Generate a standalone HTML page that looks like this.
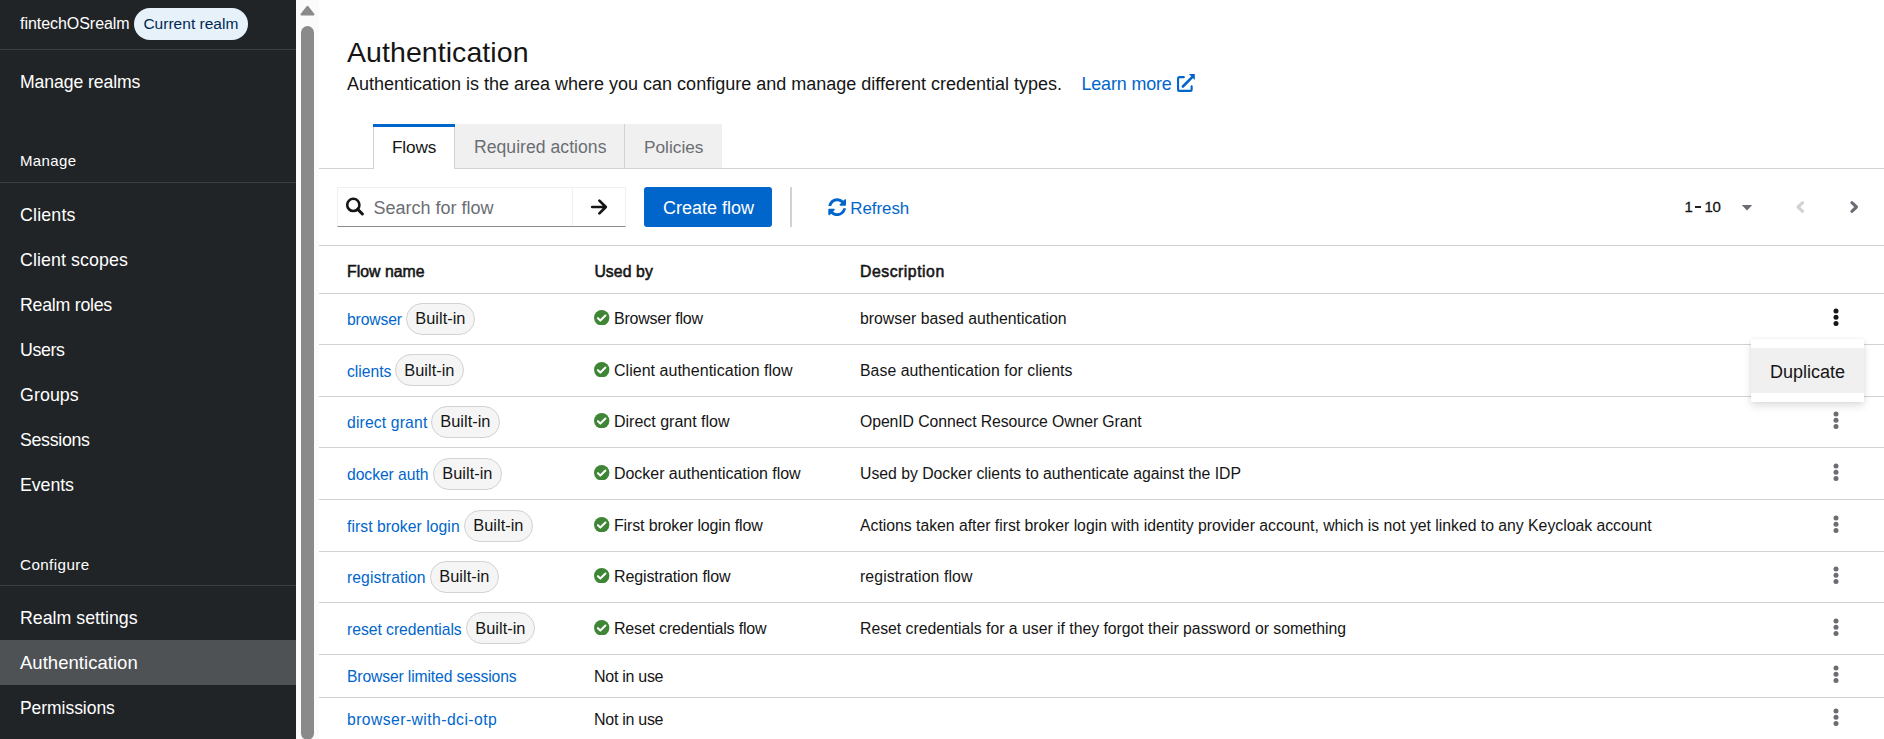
<!DOCTYPE html>
<html><head><meta charset="utf-8">
<style>
*{box-sizing:border-box;margin:0;padding:0}
html,body{width:1884px;height:739px;overflow:hidden;background:#fff;font-family:"Liberation Sans",sans-serif;color:#151515}
.t{position:absolute;white-space:nowrap}
.r{position:absolute}
</style></head><body>
<div class="r" style="left:0px;top:0px;width:296px;height:739px;background:#212427;"></div>
<div class="t" style="left:20px;top:14.46px;font-size:16px;line-height:20px;color:#fff;letter-spacing:-0.045px;">fintechOSrealm</div>
<div class="r" style="left:134px;top:8px;width:114px;height:32px;background:#e7f1fa;border-radius:16px"></div>
<div class="t" style="left:143.4px;top:13.83px;font-size:15.5px;line-height:19px;color:#002952;letter-spacing:0.021px;">Current realm</div>
<div class="r" style="left:0px;top:49px;width:296px;height:1px;background:#3c3f42;"></div>
<div class="t" style="left:20px;top:70.60px;font-size:17.6px;line-height:22px;color:#fff;letter-spacing:-0.076px;">Manage realms</div>
<div class="t" style="left:20px;top:151.30px;font-size:15px;line-height:19px;color:#fff;letter-spacing:0.355px;">Manage</div>
<div class="r" style="left:0px;top:182px;width:296px;height:1px;background:#3c3f42;"></div>
<div class="t" style="left:20px;top:203.83px;font-size:17.8px;line-height:22px;color:#fff;letter-spacing:0.179px;">Clients</div>
<div class="t" style="left:20px;top:248.83px;font-size:17.8px;line-height:22px;color:#fff;letter-spacing:0.096px;">Client scopes</div>
<div class="t" style="left:20px;top:293.83px;font-size:17.8px;line-height:22px;color:#fff;letter-spacing:-0.266px;">Realm roles</div>
<div class="t" style="left:20px;top:338.83px;font-size:17.8px;line-height:22px;color:#fff;letter-spacing:-0.376px;">Users</div>
<div class="t" style="left:20px;top:383.83px;font-size:17.8px;line-height:22px;color:#fff;letter-spacing:0.083px;">Groups</div>
<div class="t" style="left:20px;top:428.83px;font-size:17.8px;line-height:22px;color:#fff;letter-spacing:-0.318px;">Sessions</div>
<div class="t" style="left:20px;top:473.83px;font-size:17.8px;line-height:22px;color:#fff;letter-spacing:-0.085px;">Events</div>
<div class="t" style="left:20px;top:554.83px;font-size:15.2px;line-height:19px;color:#fff;letter-spacing:0.414px;">Configure</div>
<div class="r" style="left:0px;top:585px;width:296px;height:1px;background:#3c3f42;"></div>
<div class="t" style="left:20px;top:606.83px;font-size:17.8px;line-height:22px;color:#fff;letter-spacing:-0.004px;">Realm settings</div>
<div class="r" style="left:0px;top:640px;width:296px;height:45px;background:#4f5255;"></div>
<div class="t" style="left:20px;top:650.79px;font-size:18.5px;line-height:23px;color:#fff;letter-spacing:0.035px;">Authentication</div>
<div class="t" style="left:20px;top:696.64px;font-size:17.5px;line-height:22px;color:#fff;letter-spacing:-0.049px;">Permissions</div>
<div class="r" style="left:296px;top:0px;width:23px;height:739px;background:#fbfbfb;"></div>
<svg class="r" style="left:296px;top:0" width="23" height="20"><path d="M5.6 14.5 L11.5 6.9 L17.4 14.5 Z" fill="#8a8a8a" stroke="#8a8a8a" stroke-width="2.2" stroke-linejoin="round"/></svg>
<div class="r" style="left:301px;top:26px;width:13px;height:714px;background:#8a8a8a;border-radius:6.5px"></div>
<div class="t" style="left:347px;top:33.92px;font-size:28.5px;line-height:36px;color:#151515;letter-spacing:0.068px;">Authentication</div>
<div class="t" style="left:347px;top:73.16px;font-size:18px;line-height:22px;color:#151515;letter-spacing:-0.002px;">Authentication is the area where you can configure and manage different credential types.</div>
<div class="t" style="left:1081.5px;top:73.00px;font-size:17.9px;line-height:22px;color:#0066cc;letter-spacing:-0.14px;">Learn more</div>
<svg class="r" style="left:1176px;top:73px" width="20" height="20" viewBox="0 0 20 20"><path d="M7.8 4.15 H3.5 Q2.05 4.15 2.05 5.6 V16.4 Q2.05 17.85 3.5 17.85 H14.2 Q15.65 17.85 15.65 16.4 V13.2" fill="none" stroke="#0066cc" stroke-width="2.1" stroke-linecap="round"/><path d="M6.9 13.5 L16.2 4.1" stroke="#0066cc" stroke-width="2.6" stroke-linecap="round"/><path d="M12.9 1.1 H18.8 V7 Z" fill="#0066cc"/></svg>
<div class="r" style="left:319px;top:168px;width:1565px;height:1px;background:#d2d2d2;"></div>
<div class="r" style="left:455px;top:124px;width:267px;height:44px;background:#f0f0f0;"></div>
<div class="r" style="left:624px;top:124px;width:1px;height:44px;background:#d2d2d2;"></div>
<div class="r" style="left:373px;top:124px;width:82px;height:45px;background:#fff;border-left:1px solid #d2d2d2;border-right:1px solid #d2d2d2"></div>
<div class="r" style="left:373px;top:124px;width:82px;height:3px;background:#0066cc;"></div>
<div class="t" style="left:392px;top:135.94px;font-size:17.2px;line-height:22px;color:#151515;letter-spacing:-0.134px;">Flows</div>
<div class="t" style="left:474px;top:135.80px;font-size:17.6px;line-height:22px;color:#6a6e73;letter-spacing:0.027px;">Required actions</div>
<div class="t" style="left:644px;top:135.91px;font-size:17.3px;line-height:22px;color:#6a6e73;letter-spacing:-0.014px;">Policies</div>
<div class="r" style="left:337px;top:187px;width:289px;height:40px;background:#fff;border:1px solid #f0f0f0;border-bottom:1px solid #8a8d90"></div>
<div class="r" style="left:572px;top:188px;width:1px;height:38px;background:#f0f0f0;"></div>
<svg class="r" style="left:344px;top:196px" width="22" height="22" viewBox="0 0 22 22"><circle cx="9.3" cy="8.9" r="6.1" fill="none" stroke="#151515" stroke-width="2.6"/><path d="M13.8 13.4 L18.4 18" stroke="#151515" stroke-width="3" stroke-linecap="round"/></svg>
<div class="t" style="left:373.5px;top:196.56px;font-size:18px;line-height:22px;color:#6a6e73;letter-spacing:-0.008px;">Search for flow</div>
<svg class="r" style="left:589px;top:197px" width="20" height="20" viewBox="0 0 20 20"><path d="M3.2 10 H16.5 M10.4 3.6 L16.8 10 L10.4 16.4" fill="none" stroke="#151515" stroke-width="2.7" stroke-linecap="round" stroke-linejoin="round"/></svg>
<div class="r" style="left:644px;top:187px;width:128px;height:40px;background:#0066cc;border-radius:3px"></div>
<div class="t" style="left:663px;top:197.16px;font-size:18px;line-height:22px;color:#fff;letter-spacing:-0.008px;">Create flow</div>
<div class="r" style="left:790px;top:187px;width:2px;height:40px;background:#d2d2d2;"></div>
<svg class="r" style="left:827.8px;top:197.8px" width="18.4" height="18.4" viewBox="0 0 512 512"><path fill="#0066cc" d="M370.72 133.28C339.458 104.008 298.888 87.962 255.848 88c-77.458.068-144.328 53.178-162.791 126.85-1.344 5.363-6.122 9.15-11.651 9.15H24.103c-7.498 0-13.194-6.807-11.807-14.176C33.933 94.924 134.813 8 256 8c66.448 0 126.791 26.136 171.315 68.685L463.03 40.97C478.149 25.851 504 36.559 504 57.941V192c0 13.255-10.745 24-24 24H345.941c-21.382 0-32.090-25.851-16.971-40.971l41.75-41.749zM32 296h134.059c21.382 0 32.090 25.851 16.971 40.971l-41.75 41.750c31.262 29.273 71.835 45.319 114.876 45.280 77.418-.07 144.315-53.144 162.787-126.849 1.344-5.363 6.122-9.150 11.651-9.150h57.304c7.498 0 13.194 6.807 11.807 14.176C478.067 417.076 377.187 504 256 504c-66.448 0-126.791-26.136-171.315-68.685L48.970 471.030C33.851 486.149 8 475.441 8 454.059V320c0-13.255 10.745-24 24-24z"/></svg>
<div class="t" style="left:850.3px;top:198.14px;font-size:16.9px;line-height:21px;color:#0066cc;letter-spacing:-0.032px;">Refresh</div>
<div class="t" style="left:1684.5px;top:197.30px;font-size:15px;line-height:19px;color:#151515;-webkit-text-stroke:0.3px #151515;">1</div>
<div class="r" style="left:1695.1px;top:206.3px;width:5.9px;height:1.4px;background:#202020;"></div>
<div class="t" style="left:1704.5px;top:197.30px;font-size:15px;line-height:19px;color:#151515;letter-spacing:-0.3px;-webkit-text-stroke:0.3px #151515;">10</div>
<svg class="r" style="left:1740px;top:203px" width="14" height="9" viewBox="0 0 14 9"><path d="M1.8 2 H12.2 L7 7.4 Z" fill="#6a6e73"/></svg>
<svg class="r" style="left:1794px;top:199px" width="13" height="16" viewBox="0 0 13 16"><path d="M8.6 3.7 L4 8 L8.6 12.3" fill="none" stroke="#d2d2d2" stroke-width="3.1" stroke-linecap="round" stroke-linejoin="round"/></svg>
<svg class="r" style="left:1848px;top:199px" width="13" height="16" viewBox="0 0 13 16"><path d="M3.9 3.7 L8.5 8 L3.9 12.3" fill="none" stroke="#6a6e73" stroke-width="3.1" stroke-linecap="round" stroke-linejoin="round"/></svg>
<div class="r" style="left:319px;top:245px;width:1565px;height:1px;background:#d2d2d2;"></div>
<div class="t" style="left:347px;top:261.93px;font-size:15.8px;line-height:20px;color:#151515;letter-spacing:0.042px;-webkit-text-stroke:0.55px #151515;">Flow name</div>
<div class="t" style="left:594.4px;top:261.93px;font-size:15.8px;line-height:20px;color:#151515;letter-spacing:0.076px;-webkit-text-stroke:0.55px #151515;">Used by</div>
<div class="t" style="left:860px;top:261.93px;font-size:15.8px;line-height:20px;color:#151515;letter-spacing:0.516px;-webkit-text-stroke:0.55px #151515;">Description</div>
<div class="r" style="left:319px;top:293px;width:1565px;height:1px;background:#d2d2d2;"></div>
<div class="t" style="left:347px;top:310.06px;font-size:15.7px;line-height:20px;color:#0066cc;letter-spacing:-0.142px;">browser</div>
<div class="r" style="left:406px;top:303px;width:69px;height:32px;background:#f5f5f5;border:1px solid #d2d2d2;border-radius:16px"></div>
<div class="t" style="left:415.3px;top:308.12px;font-size:16.4px;line-height:20px;color:#151515;letter-spacing:0.008px;">Built-in</div>
<svg class="r" style="left:594.2px;top:310.1px" width="15.4" height="15.4" viewBox="0 0 16 16"><circle cx="8" cy="8" r="8" fill="#3e8635"/><path d="M4.1 8.5 L6.6 11 L11.9 5.7" fill="none" stroke="#fff" stroke-width="2.1" stroke-linecap="round" stroke-linejoin="round"/></svg>
<div class="t" style="left:614px;top:309.06px;font-size:16px;line-height:20px;color:#151515;letter-spacing:-0.231px;">Browser flow</div>
<div class="t" style="left:860px;top:309.13px;font-size:15.8px;line-height:20px;color:#151515;letter-spacing:0.01px;">browser based authentication</div>
<svg class="r" style="left:1832px;top:307.7px" width="8" height="19" viewBox="0 0 8 19"><circle cx="4" cy="3" r="2.5" fill="#151515"/><circle cx="4" cy="9.2" r="2.5" fill="#151515"/><circle cx="4" cy="15.4" r="2.5" fill="#151515"/></svg>
<div class="r" style="left:319px;top:344px;width:1565px;height:1px;background:#d2d2d2;"></div>
<div class="t" style="left:347px;top:361.56px;font-size:15.7px;line-height:20px;color:#0066cc;letter-spacing:-0.002px;">clients</div>
<div class="r" style="left:395px;top:354px;width:69px;height:32px;background:#f5f5f5;border:1px solid #d2d2d2;border-radius:16px"></div>
<div class="t" style="left:404.3px;top:359.62px;font-size:16.4px;line-height:20px;color:#151515;letter-spacing:0.008px;">Built-in</div>
<svg class="r" style="left:594.2px;top:361.6px" width="15.4" height="15.4" viewBox="0 0 16 16"><circle cx="8" cy="8" r="8" fill="#3e8635"/><path d="M4.1 8.5 L6.6 11 L11.9 5.7" fill="none" stroke="#fff" stroke-width="2.1" stroke-linecap="round" stroke-linejoin="round"/></svg>
<div class="t" style="left:614px;top:360.56px;font-size:16px;line-height:20px;color:#151515;letter-spacing:0.027px;">Client authentication flow</div>
<div class="t" style="left:860px;top:360.63px;font-size:15.8px;line-height:20px;color:#151515;letter-spacing:0.053px;">Base authentication for clients</div>
<div class="r" style="left:319px;top:396px;width:1565px;height:1px;background:#d2d2d2;"></div>
<div class="t" style="left:347px;top:413.06px;font-size:15.7px;line-height:20px;color:#0066cc;letter-spacing:0.16px;">direct grant</div>
<div class="r" style="left:431px;top:406px;width:69px;height:32px;background:#f5f5f5;border:1px solid #d2d2d2;border-radius:16px"></div>
<div class="t" style="left:440.3px;top:411.12px;font-size:16.4px;line-height:20px;color:#151515;letter-spacing:0.008px;">Built-in</div>
<svg class="r" style="left:594.2px;top:413.1px" width="15.4" height="15.4" viewBox="0 0 16 16"><circle cx="8" cy="8" r="8" fill="#3e8635"/><path d="M4.1 8.5 L6.6 11 L11.9 5.7" fill="none" stroke="#fff" stroke-width="2.1" stroke-linecap="round" stroke-linejoin="round"/></svg>
<div class="t" style="left:614px;top:412.06px;font-size:16px;line-height:20px;color:#151515;letter-spacing:-0.003px;">Direct grant flow</div>
<div class="t" style="left:860px;top:412.13px;font-size:15.8px;line-height:20px;color:#151515;letter-spacing:-0.087px;">OpenID Connect Resource Owner Grant</div>
<svg class="r" style="left:1832px;top:411.4px" width="8" height="19" viewBox="0 0 8 19"><circle cx="4" cy="3" r="2.5" fill="#6a6e73"/><circle cx="4" cy="9.2" r="2.5" fill="#6a6e73"/><circle cx="4" cy="15.4" r="2.5" fill="#6a6e73"/></svg>
<div class="r" style="left:319px;top:447px;width:1565px;height:1px;background:#d2d2d2;"></div>
<div class="t" style="left:347px;top:464.56px;font-size:15.7px;line-height:20px;color:#0066cc;letter-spacing:-0.053px;">docker auth</div>
<div class="r" style="left:433px;top:458px;width:69px;height:32px;background:#f5f5f5;border:1px solid #d2d2d2;border-radius:16px"></div>
<div class="t" style="left:442.3px;top:462.62px;font-size:16.4px;line-height:20px;color:#151515;letter-spacing:0.008px;">Built-in</div>
<svg class="r" style="left:594.2px;top:464.6px" width="15.4" height="15.4" viewBox="0 0 16 16"><circle cx="8" cy="8" r="8" fill="#3e8635"/><path d="M4.1 8.5 L6.6 11 L11.9 5.7" fill="none" stroke="#fff" stroke-width="2.1" stroke-linecap="round" stroke-linejoin="round"/></svg>
<div class="t" style="left:614px;top:463.56px;font-size:16px;line-height:20px;color:#151515;letter-spacing:-0.041px;">Docker authentication flow</div>
<div class="t" style="left:860px;top:463.63px;font-size:15.8px;line-height:20px;color:#151515;letter-spacing:-0.018px;">Used by Docker clients to authenticate against the IDP</div>
<svg class="r" style="left:1832px;top:462.9px" width="8" height="19" viewBox="0 0 8 19"><circle cx="4" cy="3" r="2.5" fill="#6a6e73"/><circle cx="4" cy="9.2" r="2.5" fill="#6a6e73"/><circle cx="4" cy="15.4" r="2.5" fill="#6a6e73"/></svg>
<div class="r" style="left:319px;top:499px;width:1565px;height:1px;background:#d2d2d2;"></div>
<div class="t" style="left:347px;top:516.56px;font-size:15.7px;line-height:20px;color:#0066cc;letter-spacing:0.059px;">first broker login</div>
<div class="r" style="left:464px;top:510px;width:69px;height:32px;background:#f5f5f5;border:1px solid #d2d2d2;border-radius:16px"></div>
<div class="t" style="left:473.3px;top:514.62px;font-size:16.4px;line-height:20px;color:#151515;letter-spacing:0.008px;">Built-in</div>
<svg class="r" style="left:594.2px;top:516.6px" width="15.4" height="15.4" viewBox="0 0 16 16"><circle cx="8" cy="8" r="8" fill="#3e8635"/><path d="M4.1 8.5 L6.6 11 L11.9 5.7" fill="none" stroke="#fff" stroke-width="2.1" stroke-linecap="round" stroke-linejoin="round"/></svg>
<div class="t" style="left:614px;top:515.56px;font-size:16px;line-height:20px;color:#151515;letter-spacing:-0.149px;">First broker login flow</div>
<div class="t" style="left:860px;top:515.63px;font-size:15.8px;line-height:20px;color:#151515;letter-spacing:-0.018px;">Actions taken after first broker login with identity provider account, which is not yet linked to any Keycloak account</div>
<svg class="r" style="left:1832px;top:514.9px" width="8" height="19" viewBox="0 0 8 19"><circle cx="4" cy="3" r="2.5" fill="#6a6e73"/><circle cx="4" cy="9.2" r="2.5" fill="#6a6e73"/><circle cx="4" cy="15.4" r="2.5" fill="#6a6e73"/></svg>
<div class="r" style="left:319px;top:551px;width:1565px;height:1px;background:#d2d2d2;"></div>
<div class="t" style="left:347px;top:568.06px;font-size:15.7px;line-height:20px;color:#0066cc;letter-spacing:0.084px;">registration</div>
<div class="r" style="left:430px;top:561px;width:69px;height:32px;background:#f5f5f5;border:1px solid #d2d2d2;border-radius:16px"></div>
<div class="t" style="left:439.3px;top:566.12px;font-size:16.4px;line-height:20px;color:#151515;letter-spacing:0.008px;">Built-in</div>
<svg class="r" style="left:594.2px;top:568.1px" width="15.4" height="15.4" viewBox="0 0 16 16"><circle cx="8" cy="8" r="8" fill="#3e8635"/><path d="M4.1 8.5 L6.6 11 L11.9 5.7" fill="none" stroke="#fff" stroke-width="2.1" stroke-linecap="round" stroke-linejoin="round"/></svg>
<div class="t" style="left:614px;top:567.06px;font-size:16px;line-height:20px;color:#151515;letter-spacing:-0.107px;">Registration flow</div>
<div class="t" style="left:860px;top:567.13px;font-size:15.8px;line-height:20px;color:#151515;letter-spacing:0.108px;">registration flow</div>
<svg class="r" style="left:1832px;top:566.4px" width="8" height="19" viewBox="0 0 8 19"><circle cx="4" cy="3" r="2.5" fill="#6a6e73"/><circle cx="4" cy="9.2" r="2.5" fill="#6a6e73"/><circle cx="4" cy="15.4" r="2.5" fill="#6a6e73"/></svg>
<div class="r" style="left:319px;top:602px;width:1565px;height:1px;background:#d2d2d2;"></div>
<div class="t" style="left:347px;top:619.56px;font-size:15.7px;line-height:20px;color:#0066cc;letter-spacing:-0.025px;">reset credentials</div>
<div class="r" style="left:466px;top:612px;width:69px;height:32px;background:#f5f5f5;border:1px solid #d2d2d2;border-radius:16px"></div>
<div class="t" style="left:475.3px;top:617.62px;font-size:16.4px;line-height:20px;color:#151515;letter-spacing:0.008px;">Built-in</div>
<svg class="r" style="left:594.2px;top:619.6px" width="15.4" height="15.4" viewBox="0 0 16 16"><circle cx="8" cy="8" r="8" fill="#3e8635"/><path d="M4.1 8.5 L6.6 11 L11.9 5.7" fill="none" stroke="#fff" stroke-width="2.1" stroke-linecap="round" stroke-linejoin="round"/></svg>
<div class="t" style="left:614px;top:618.56px;font-size:16px;line-height:20px;color:#151515;letter-spacing:-0.189px;">Reset credentials flow</div>
<div class="t" style="left:860px;top:618.63px;font-size:15.8px;line-height:20px;color:#151515;letter-spacing:-0.018px;">Reset credentials for a user if they forgot their password or something</div>
<svg class="r" style="left:1832px;top:617.9px" width="8" height="19" viewBox="0 0 8 19"><circle cx="4" cy="3" r="2.5" fill="#6a6e73"/><circle cx="4" cy="9.2" r="2.5" fill="#6a6e73"/><circle cx="4" cy="15.4" r="2.5" fill="#6a6e73"/></svg>
<div class="r" style="left:319px;top:654px;width:1565px;height:1px;background:#d2d2d2;"></div>
<div class="t" style="left:347px;top:667.06px;font-size:15.7px;line-height:20px;color:#0066cc;letter-spacing:-0.132px;">Browser limited sessions</div>
<div class="t" style="left:594px;top:666.86px;font-size:16px;line-height:20px;color:#151515;letter-spacing:-0.282px;">Not in use</div>
<svg class="r" style="left:1832px;top:665.4px" width="8" height="19" viewBox="0 0 8 19"><circle cx="4" cy="3" r="2.5" fill="#6a6e73"/><circle cx="4" cy="9.2" r="2.5" fill="#6a6e73"/><circle cx="4" cy="15.4" r="2.5" fill="#6a6e73"/></svg>
<div class="r" style="left:319px;top:697px;width:1565px;height:1px;background:#d2d2d2;"></div>
<div class="t" style="left:347px;top:710.06px;font-size:15.7px;line-height:20px;color:#0066cc;letter-spacing:0.445px;">browser-with-dci-otp</div>
<div class="t" style="left:594px;top:709.86px;font-size:16px;line-height:20px;color:#151515;letter-spacing:-0.282px;">Not in use</div>
<svg class="r" style="left:1832px;top:708.4px" width="8" height="19" viewBox="0 0 8 19"><circle cx="4" cy="3" r="2.5" fill="#6a6e73"/><circle cx="4" cy="9.2" r="2.5" fill="#6a6e73"/><circle cx="4" cy="15.4" r="2.5" fill="#6a6e73"/></svg>
<div class="r" style="left:1751px;top:339px;width:113px;height:63px;background:#fff;box-shadow:0 4px 8px rgba(3,3,3,0.12),0 0 4px rgba(3,3,3,0.06)"></div>
<div class="r" style="left:1751px;top:348px;width:113px;height:45px;background:#f0f0f0;"></div>
<div class="t" style="left:1770px;top:361.06px;font-size:18px;line-height:22px;color:#151515;letter-spacing:-0.008px;">Duplicate</div>
</body></html>
